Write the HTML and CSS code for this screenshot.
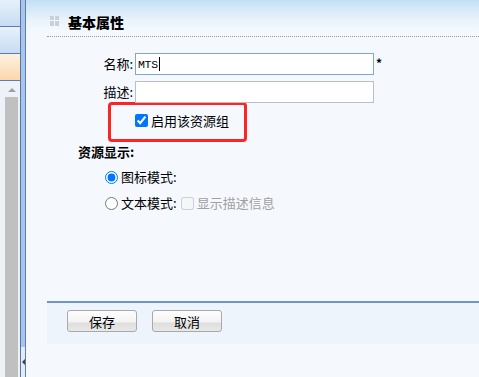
FILE: index.html
```html
<!DOCTYPE html>
<html lang="zh-CN">
<head>
  <meta charset="UTF-8" />
  <meta name="viewport" content="width=device-width, initial-scale=1.0"/>
  <title>资源组属性</title>
  <link rel="stylesheet" href="styles.css">
</head>
<body>
  <div class="page">
    <div class="sidebar">
      <div class="tab"></div>
      <div class="tab"></div>
      <div class="tab active"></div>
      <div class="scroll">
        <div class="scroll-up"></div>
        <div class="scroll-thumb"></div>
      </div>
    </div>

    <div class="splitter">
      <div class="splitter-handle"><span class="splitter-arrow"></span></div>
    </div>

    <div class="main">
      <div class="header">
        <div class="title"><span class="title-icon"></span>基本属性</div>
      </div>

      <div class="form">
        <div class="row">
          <label class="field-label">名称:</label>
          <div class="text focus">MTS<span class="caret"></span></div>
          <span class="req">*</span>
        </div>
        <div class="row">
          <label class="field-label">描述:</label>
          <input class="text" type="text">
        </div>

        <div class="highlight">
          <label class="check"><input type="checkbox" checked>启用该资源组</label>
        </div>

        <div class="section">资源显示:</div>
        <div class="option">
          <label class="check"><input type="radio" name="mode" checked>图标模式:</label>
        </div>
        <div class="option">
          <label class="check"><input type="radio" name="mode">文本模式:</label>
          <label class="check disabled"><input type="checkbox" disabled>显示描述信息</label>
        </div>
      </div>

      <div class="actions">
        <button>保存</button>
        <button>取消</button>
      </div>
    </div>
  </div>
</body>
</html>
```

FILE: styles.css
```css
body {
  margin: 0;
  background-color: #f5f9fe;
  font-family: "Noto Sans CJK SC", "Noto Sans", sans-serif;
  font-size: 13px;
  color: #000;
}

.page {
  display: flex;
  height: 377px;
  overflow: hidden;
}

/* left navigation strip */
.sidebar {
  width: 20px;
  display: flex;
  flex-direction: column;
  background-color: #edf2f9;
}

.tab {
  height: 26px;
  border-bottom: 1px solid #5b7bb5;
  background: linear-gradient(#e8f1fb, #c6dcf3);
}

.tab.active {
  background: linear-gradient(#fdf1e2, #fbd8ab);
}

.scroll {
  flex: 1;
  display: flex;
  flex-direction: column;
  align-items: center;
  padding-left: 3px;
}

.scroll-up {
  margin-top: 7px;
  width: 0;
  height: 0;
  border-left: 4px solid transparent;
  border-right: 4px solid transparent;
  border-bottom: 4px solid #a0a0a0;
}

.scroll-thumb {
  margin-top: 5px;
  width: 13px;
  flex: 1;
  background-color: #c0c0c0;
}

.splitter {
  width: 4px;
  border-left: 1px solid #5474ae;
  border-right: 1px solid #5c7cb6;
  background-color: #a9c5ea;
  display: flex;
  flex-direction: column;
  justify-content: flex-end;
}

.splitter-handle {
  height: 30px;
  background-color: #e4ebf3;
  display: flex;
  align-items: center;
  justify-content: center;
}

.splitter-arrow {
  width: 0;
  height: 0;
  border-top: 3px solid transparent;
  border-bottom: 3px solid transparent;
  border-right: 3px solid #404040;
}

/* content */
.main {
  flex: 1;
  display: flex;
  flex-direction: column;
}

.header {
  background: linear-gradient(#c4e0f5, #e9f3fc 20px, #f5f9fe 32px);
}

.title {
  margin-left: 21px;
  height: 24px;
  padding: 12px 0 0 3px;
  line-height: 20px;
  font-size: 14px;
  font-weight: 900;
  border-bottom: 1px dotted #999;
  display: flex;
  align-items: flex-start;
}

.title-icon {
  width: 9px;
  height: 10px;
  margin: 4px 9px 0 0;
  background:
    linear-gradient(#f5f9fe, #f5f9fe) 4px 0 / 1px 10px no-repeat,
    linear-gradient(#f5f9fe, #f5f9fe) 0 4px / 9px 1px no-repeat,
    #c9d0d8;
}

.form {
  height: 264px;
  box-sizing: border-box;
  padding: 16px 0 0 47px;
}

.row {
  display: flex;
  align-items: center;
  height: 22px;
  margin-bottom: 6px;
}

.field-label {
  width: 60px;
  margin-right: 2px;
  text-align: right;
  line-height: 18px;
}

.text {
  width: 239px;
  height: 22px;
  box-sizing: border-box;
  margin: 0;
  padding: 0 2px;
  border: 1px solid #b9bec9;
  background-color: #fff;
  font-family: "Liberation Mono", monospace;
  font-size: 11.5px;
  outline: none;
}

div.text {
  display: flex;
  align-items: center;
  letter-spacing: -0.3px;
}

.caret {
  width: 1px;
  height: 14px;
  margin-left: 1px;
  background-color: #000;
}

.text.focus {
  border-color: #7fa6d6;
}

.req {
  margin: -4px 0 0 2px;
  font-size: 12px;
  font-weight: bold;
}

.highlight {
  width: 139px;
  height: 40px;
  box-sizing: border-box;
  margin: -7px 0 0 35px;
  padding: 0 0 3px 20px;
  border: 3px solid #ff2424;
  border-radius: 4px;
  display: flex;
  align-items: center;
}

.check {
  display: flex;
  align-items: center;
  line-height: 18px;
}

.check input {
  margin-top: 0;
  margin-bottom: 0;
}

.section {
  margin: 1px 0 0 5px;
  line-height: 18px;
  font-weight: bold;
}

.option {
  display: flex;
  align-items: center;
  height: 26px;
  margin-left: 27px;
}

.section + .option {
  margin-top: 3px;
}

.disabled {
  color: #a0a0a0;
}

.actions {
  margin-left: 21px;
  height: 43px;
  box-sizing: border-box;
  padding: 7px 20px;
  border-top: 2px solid #7193cf;
  background-color: #eef4fc;
  display: flex;
  gap: 15px;
}

button {
  width: 70px;
  height: 22px;
  padding: 0;
  border: 1px solid #a9a9a9;
  border-radius: 3px;
  background: linear-gradient(#fdfdfd, #f3f3f3 55%, #dedede 60%, #e8e8e8);
  font-family: "Noto Sans CJK SC", sans-serif;
  font-size: 13px;
  color: #000;
  cursor: pointer;
}
```
